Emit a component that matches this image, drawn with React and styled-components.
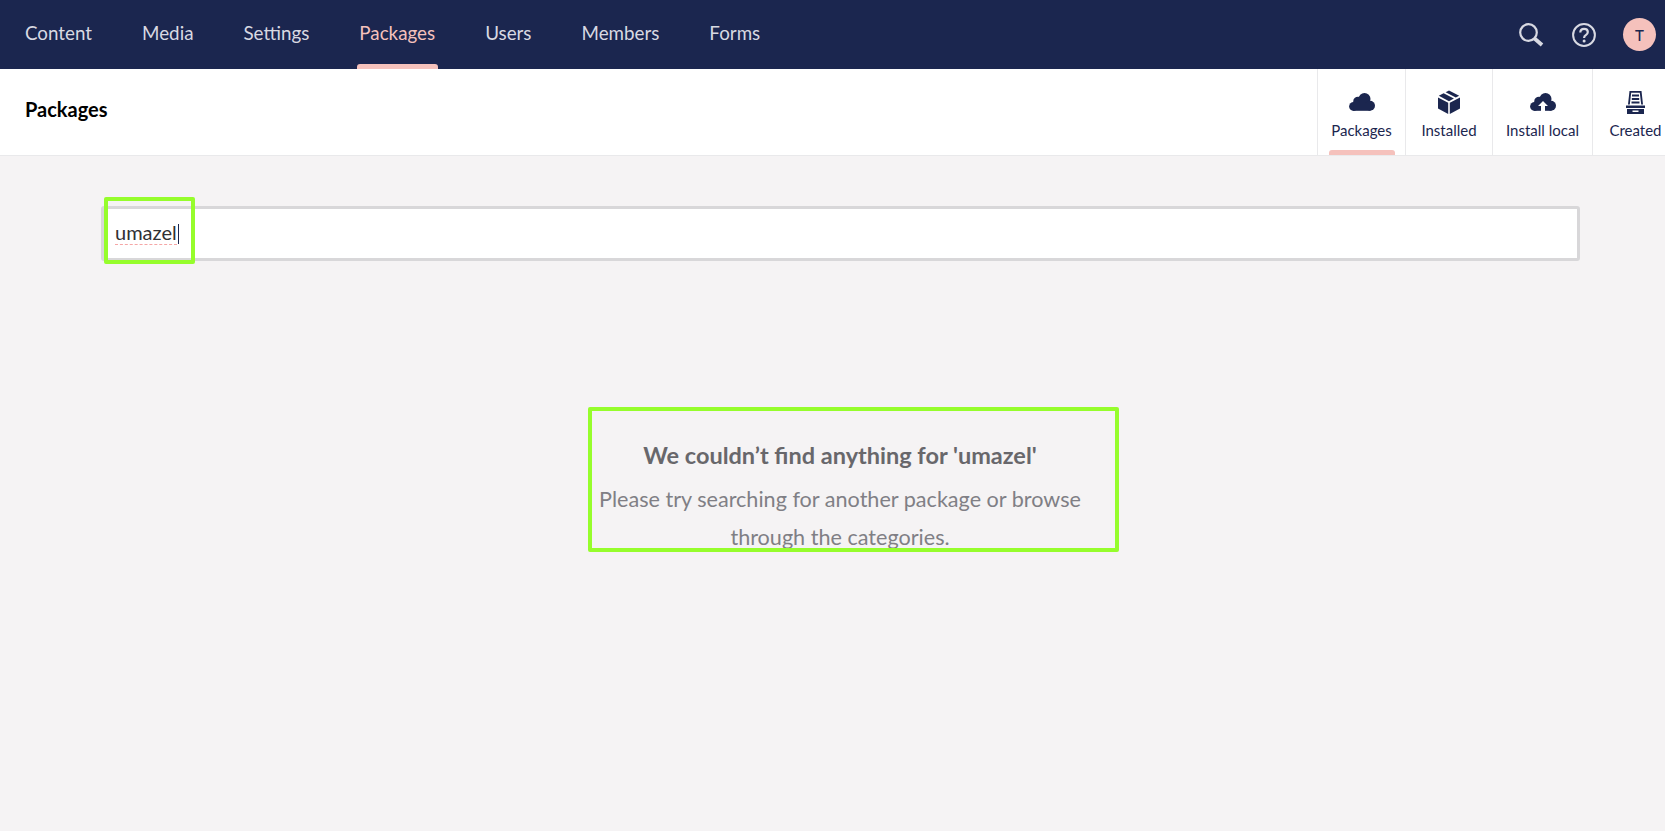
import styled, { createGlobalStyle } from "styled-components";

const GlobalStyle = createGlobalStyle`
    html, body {
        margin: 0;
        padding: 0;
        background: #f5f3f4;
    }
    * {
        box-sizing: border-box;
    }
`;

const sections = ["Content", "Media", "Settings", "Packages", "Users", "Members", "Forms"];

const Cloud = () => (
    <g fill="#1b264f">
        <circle cx="4.600" cy="13.400" r="4.500" />
        <circle cx="9" cy="8.500" r="4.800" />
        <circle cx="15.500" cy="6" r="6" />
        <circle cx="21" cy="12.800" r="5" />
        <rect x="4.500" y="10" width="17" height="7.800" />
    </g>
);

export default function App() {
    return (
        <Page>
            <GlobalStyle />
            <TopBar>
                <Sections>
                    {sections.map((name) => (
                        <Section key={name} $active={name === "Packages"}>{name}</Section>
                    ))}
                </Sections>
                <Tools>
                    <svg width="26" height="24" viewBox="0 0 26 24" fill="none">
                        <circle cx="9.500" cy="9.500" r="8.300" stroke="#d8d9e2" strokeWidth="2.200" />
                        <path d="M15.500 15.500L23 22" stroke="#d8d9e2" strokeWidth="3.800" />
                    </svg>
                    <svg width="24" height="24" viewBox="0 0 24 24" fill="none">
                        <circle cx="12" cy="12" r="10.900" stroke="#d8d9e2" strokeWidth="2" />
                        <path d="M8.300 9.400c0-2.200 1.600-3.600 3.800-3.600s3.700 1.300 3.700 3.300c0 1.500-.8 2.300-2 3.100-1.100.7-1.700 1.300-1.700 2.700" stroke="#d8d9e2" strokeWidth="2.200" />
                        <circle cx="12.100" cy="18" r="1.500" fill="#d8d9e2" />
                    </svg>
                    <Avatar>T</Avatar>
                </Tools>
            </TopBar>
            <SubHeader>
                <Title>Packages</Title>
                <Tabs>
                    <Tab $active $width={88}>
                        <TabIcon>
                            <svg width="26" height="18" viewBox="0 0 26 18"><Cloud /></svg>
                        </TabIcon>
                        <TabLabel>Packages</TabLabel>
                    </Tab>
                    <Tab $width={87}>
                        <TabIcon>
                            <svg width="22" height="24" viewBox="0 0 22 24"><path fill="#1b264f" d="M0 7.500l10.200 5.200V24L0 18.500zM22 7.500l-10.200 5.200V24L22 18.500zM.8 5.700L5.600 3.200l10.300 5.300-4.900 2.700zM7.600 2.200L11 .4l10.200 5.300-3.400 1.800z" /></svg>
                        </TabIcon>
                        <TabLabel>Installed</TabLabel>
                    </Tab>
                    <Tab $width={100}>
                        <TabIcon>
                            <svg width="26" height="18" viewBox="0 0 26 18">
                                <Cloud />
                                <path fill="#fff" d="M13 8l5 5h-3v5h-4v-5H8z" />
                            </svg>
                        </TabIcon>
                        <TabLabel>Install local</TabLabel>
                    </Tab>
                    <Tab $width={86}>
                        <TabIcon>
                            <svg width="19" height="23" viewBox="0 0 19 23"><path fill="#1b264f" fillRule="evenodd" d="M3.500 0h12l1.500 13.500h-1.800L13.800 1.800H5.200L3.800 13.500H2zM6 3.500h7v2H6zM5.800 7h7.400v2H5.800zM5.500 10.500h8v2h-8zM0 14.500h19V17H0zM1 18h17v5H1zM6.500 19.500V21h6v-1.500z" /></svg>
                        </TabIcon>
                        <TabLabel>Created</TabLabel>
                    </Tab>
                </Tabs>
            </SubHeader>
            <Content>
                <SearchWrap>
                    <SearchInput />
                    <TypedWord><Misspelled>umazel</Misspelled><Caret /></TypedWord>
                    <Highlight $left={3} $top={-9} $width={91} $height={67} />
                </SearchWrap>
                <Empty>
                    <EmptyTitle>We couldn’t find anything for 'umazel'</EmptyTitle>
                    <EmptyText>Please try searching for another package or browse through the categories.</EmptyText>
                    <Highlight $left={-2} $top={-3} $width={531} $height={145} />
                </Empty>
            </Content>
        </Page>
    );
}

const Page = styled.div`
    height: 831px;
    overflow: hidden;
    background: #f5f3f4;
    font-family: "Lato", sans-serif;
`;

const TopBar = styled.header`
    height: 69px;
    background: #1b264f;
    display: flex;
    align-items: center;
    justify-content: space-between;
    padding: 0 9px 0 25px;
`;

const Sections = styled.nav`
    display: flex;
    gap: 50px;
    height: 100%;
`;

const Section = styled.div`
    position: relative;
    display: flex;
    align-items: center;
    padding-bottom: 5px;
    font-size: 18.800px;
    color: ${(p) => (p.$active ? "#f5c1bc" : "#d8d9e2")};
    ${(p) => p.$active && `
        &::after {
            content: "";
            position: absolute;
            left: -2px;
            right: -3px;
            bottom: 0;
            height: 5px;
            background: #f5c1bc;
            border-radius: 3px 3px 0 0;
        }
    `}
`;

const Tools = styled.div`
    display: flex;
    align-items: center;
    gap: 27px;
`;

const Avatar = styled.div`
    width: 33px;
    height: 33px;
    border-radius: 50%;
    background: #f5c1bc;
    color: #1b264f;
    font-size: 15px;
    font-weight: 500;
    display: flex;
    align-items: center;
    justify-content: center;
`;

const SubHeader = styled.div`
    height: 87px;
    background: #fff;
    border-bottom: 1px solid #e9e9eb;
    display: flex;
    justify-content: space-between;
    overflow: hidden;
    padding-left: 25px;
`;

const Title = styled.div`
    font-size: 20px;
    font-weight: 700;
    color: #000;
    line-height: 80px;
`;

const Tabs = styled.div`
    display: flex;
    flex-shrink: 0;
    margin-right: -13px;
`;

const Tab = styled.div`
    position: relative;
    width: ${(p) => p.$width}px;
    height: 86px;
    padding-top: 20px;
    border-left: 1px solid #e9e9eb;
    display: flex;
    flex-direction: column;
    align-items: center;
    ${(p) => p.$active && `
        &::after {
            content: "";
            position: absolute;
            left: 11px;
            right: 10px;
            bottom: 0;
            height: 5px;
            background: #f5c1bc;
            border-radius: 3px 3px 0 0;
        }
    `}
`;

const TabIcon = styled.div`
    height: 26px;
    display: flex;
    align-items: center;
    justify-content: center;
`;

const TabLabel = styled.span`
    margin-top: 6px;
    font-size: 15px;
    line-height: 18px;
    color: #1b264f;
    white-space: nowrap;
`;

const Content = styled.main`
    padding: 50px 85px 0 101px;
`;

const SearchWrap = styled.div`
    position: relative;
    height: 55px;
`;

const SearchInput = styled.div`
    height: 100%;
    border: 3px solid #d8d7d9;
    border-radius: 3px;
    background: #fff;
`;

const TypedWord = styled.div`
    position: absolute;
    left: 14px;
    top: 14px;
    display: flex;
    font-size: 20px;
    line-height: 24px;
    color: #303033;
`;

const Misspelled = styled.span`
    height: 25px;
    border-bottom: 1px dashed #f5a6a6;
`;

const Caret = styled.span`
    width: 1px;
    height: 20px;
    margin: 4px 0 0 1px;
    background: #1b264f;
`;

const Highlight = styled.div`
    position: absolute;
    left: ${(p) => p.$left}px;
    top: ${(p) => p.$top}px;
    width: ${(p) => p.$width}px;
    height: ${(p) => p.$height}px;
    border: 4px solid #96fd2c;
    border-radius: 2px;
    pointer-events: none;
`;

const Empty = styled.div`
    position: relative;
    width: 500px;
    margin: 149px 0 0 489px;
    text-align: center;
    padding-top: 29px;
`;

const EmptyTitle = styled.div`
    font-size: 23.500px;
    font-weight: 700;
    line-height: 32px;
    color: #68676b;
`;

const EmptyText = styled.div`
    margin-top: 9px;
    font-size: 21.600px;
    line-height: 38px;
    color: #807f85;
`;
